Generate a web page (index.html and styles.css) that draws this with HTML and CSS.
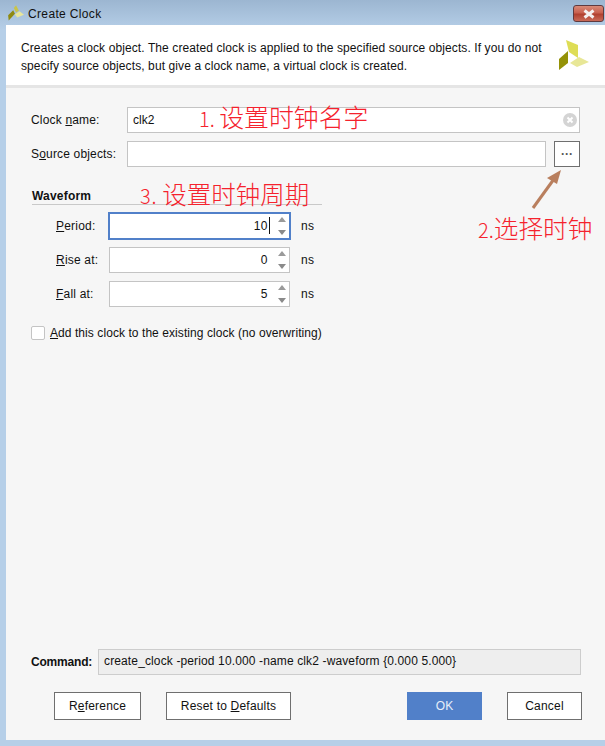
FILE: index.html
```html
<!DOCTYPE html>
<html lang="zh">
<head>
<meta charset="utf-8">
<title>Create Clock</title>
<link rel="stylesheet" href="styles.css">
</head>
<body>
<div class="window">
  <div class="titlebar">
    <svg class="logo-small" viewBox="0 0 30 30" width="17" height="17">
      <polygon points="16,2 21,12 16,15 12,7" fill="#c9c44a"/>
      <polygon points="2,20 11,11 14,17 3,29" fill="#8f8a10"/>
      <polygon points="14,18 22,13 30,19 18,24" fill="#e8e69c"/>
    </svg>
    <span class="title">Create Clock</span>
    <div class="close"><svg viewBox="0 0 14 10" width="14" height="10"><path d="M2.5 1.5 L11.5 8.5 M11.5 1.5 L2.5 8.5" stroke="#f4f0f0" stroke-width="3"/></svg></div>
  </div>
  <div class="main">
    <header class="intro">
      <p class="intro-text">Creates a clock object. The created clock is applied to the specified source objects. If you do not<br>specify source objects, but give a clock name, a virtual clock is created.</p>
      <svg class="logo" viewBox="0 0 30 30" width="30" height="30">
        <polygon points="7,0 19,5 19,18 10,12" fill="#dedd55"/>
        <polygon points="0,19 9,11 9,23 0,30" fill="#949207"/>
        <polygon points="11,23 20,17 30,22 18,27" fill="#e8e797"/>
      </svg>
    </header>
    <div class="content">
      <div class="row first">
        <label class="label"><span>Clock <u>n</u>ame:</span></label>
        <div class="input grow with-clear">clk2
          <svg class="clear" viewBox="0 0 14 14" width="14" height="14"><circle cx="7" cy="7" r="7" fill="#d4d4d4"/><path d="M4.5 4.5 L9.5 9.5 M9.5 4.5 L4.5 9.5" stroke="#fff" stroke-width="2"/></svg>
        </div>
      </div>
      <div class="row second">
        <label class="label"><span>S<u>o</u>urce objects:</span></label>
        <div class="input grow"></div>
        <button class="browse">···</button>
      </div>
      <div class="section">Waveform</div>
      <div class="spin-list">
        <div class="spin-row">
          <label class="spin-label"><u>P</u>eriod:</label>
          <div class="spin focused"><span class="val">10<i class="caret"></i></span><span class="arrows"><i class="up"></i><i class="down"></i></span></div>
          <span class="unit">ns</span>
        </div>
        <div class="spin-row">
          <label class="spin-label"><u>R</u>ise at:</label>
          <div class="spin"><span class="val">0</span><span class="arrows"><i class="up"></i><i class="down"></i></span></div>
          <span class="unit">ns</span>
        </div>
        <div class="spin-row">
          <label class="spin-label"><u>F</u>all at:</label>
          <div class="spin"><span class="val">5</span><span class="arrows"><i class="up"></i><i class="down"></i></span></div>
          <span class="unit">ns</span>
        </div>
      </div>
      <label class="check"><i class="box"></i><span><u>A</u>dd this clock to the existing clock (no overwriting)</span></label>
      <div class="spacer"></div>
      <div class="command">
        <b class="cmd-label">Command:</b>
        <div class="cmd-box">create_clock -period 10.000 -name clk2 -waveform {0.000 5.000}</div>
      </div>
      <div class="actions">
        <button class="btn ref">R<u>e</u>ference</button>
        <button class="btn reset">Reset to <u>D</u>efaults</button>
        <span class="gap"></span>
        <button class="btn ok">OK</button>
        <button class="btn cancel">Cancel</button>
      </div>
    </div>
  </div>
  <div class="note note1"><span class="num">1. </span>设置时钟名字</div>
  <div class="note note2"><span class="num">2.</span>选择时钟</div>
  <div class="note note3"><span class="num">3. </span>设置时钟周期</div>
  <svg class="pointer" viewBox="0 0 50 50" width="50" height="50">
    <path d="M6 42 L27 13" stroke="#b97f5e" stroke-width="3"/>
    <polygon points="34,4 20,12 30,18" fill="#b97f5e"/>
  </svg>
</div>
</body>
</html>
```
FILE: styles.css
```css
* { box-sizing: border-box; }
html, body { margin: 0; padding: 0; }
body {
  width: 605px;
  height: 746px;
  overflow: hidden;
  font-family: "Liberation Sans", Arial, sans-serif;
  font-size: 12px;
  color: #111;
}
.window {
  position: relative;
  width: 605px;
  height: 746px;
  display: flex;
  flex-direction: column;
  background: linear-gradient(#9cb6d1 0, #b6cfe8 30px, #b6cfe8 100%);
}
.titlebar {
  height: 25px;
  flex: none;
  display: flex;
  align-items: center;
  padding: 0 1px 0 7px;
}
.logo-small { margin-right: 4px; margin-top: 0; }
.title { font-size: 12px; letter-spacing: 0.35px; color: #111; margin-top: 2px; }
.close {
  margin-left: auto;
  margin-top: 2px;
  width: 31px;
  height: 17px;
  border: 1px solid #5f3a3f;
  border-radius: 3px;
  background: linear-gradient(#d98a78 0, #c8604f 45%, #b0402f 55%, #c96a58 100%);
  display: flex;
  align-items: center;
  justify-content: center;
}
.main {
  flex: 1;
  margin: 0 0 6px 6px;
  display: flex;
  flex-direction: column;
  min-height: 0;
  background: #f6f6f6;
}
.intro {
  height: 63px;
  flex: none;
  background: #fff;
  border-bottom: 3px solid #e5e5e5;
  padding: 14px 16px 0 15px;
  display: flex;
  justify-content: space-between;
}
.intro-text { margin: 0; line-height: 18px; letter-spacing: 0.1px; }
.logo { margin-top: 1px; }
.content {
  flex: 1;
  display: flex;
  flex-direction: column;
  padding: 19px 24px 20px 25px;
  min-height: 0;
}
.row { display: flex; align-items: center; }
.first { height: 26px; margin-right: 1px; }
.second { height: 26px; margin-top: 8px; margin-right: 1px; }
.label { width: 96px; flex: none; letter-spacing: 0.17px; }
.input {
  height: 26px;
  background: #fff;
  border: 1px solid #c4c4c4;
  padding: 0 5px;
  line-height: 24px;
  position: relative;
}
.grow { flex: 1; }
.clear { position: absolute; right: 2px; top: 5px; }
.browse {
  width: 26px;
  height: 26px;
  margin-left: 8px;
  background: #fff;
  border: 1px solid #6f6f6f;
  font: bold 12px "Liberation Sans", sans-serif;
  color: #555;
  padding: 0;
}
.section {
  margin-top: 22px;
  width: 290px;
  margin-left: 1px;
  height: 16px;
  border-bottom: 1px solid #c9c9c9;
  font-weight: bold;
  font-size: 12px;
  line-height: 14px;
  letter-spacing: 0.2px;
  margin-bottom: 8px;
}
.spin-list { display: flex; flex-direction: column; gap: 8px; }
.spin-row { display: flex; align-items: center; height: 26px; }
.spin-label { width: 53px; margin-left: 25px; letter-spacing: 0.2px; }
.spin {
  width: 181px;
  height: 26px;
  flex: none;
  border: 1px solid #c4c4c4;
  background: #fff;
  display: flex;
  align-items: center;
  justify-content: flex-end;
}
.focused { border: 2px solid #5180c9; width: 183px; height: 28px; margin: 0 -1px; }
.val { margin-right: 6px; position: relative; letter-spacing: 0.5px; }
.focused .val { margin-right: 6px; }
.caret {
  position: absolute;
  right: -2px;
  top: -2px;
  width: 1px;
  height: 17px;
  background: #111;
}
.arrows { width: 15px; display: flex; flex-direction: column; align-items: center; gap: 8px; }
.up, .down { display: block; width: 0; height: 0; border-left: 4.5px solid transparent; border-right: 4.5px solid transparent; }
.up { border-bottom: 5px solid #9a9a9a; }
.down { border-top: 5px solid #8a8a8a; }
.unit { margin-left: 11px; letter-spacing: 0.3px; }
.check { display: flex; align-items: center; gap: 5px; margin-top: 18px; height: 15px; letter-spacing: 0.07px; }
.box {
  width: 14px;
  height: 14px;
  background: #fff;
  border: 1px solid #c4c4c4;
  border-radius: 2px;
}
.spacer { flex: 1; }
.command { display: flex; align-items: center; height: 26px; }
.cmd-label { width: 67px; flex: none; letter-spacing: -0.2px; }
.cmd-box {
  flex: 1;
  height: 26px;
  background: #eee;
  border: 1px solid #cdcdcd;
  padding: 0 5px;
  line-height: 23px;
  letter-spacing: 0.13px;
}
.actions { display: flex; margin-top: 17px; margin-left: 23px; margin-right: -1px; }
.btn {
  height: 28px;
  background: #fff;
  border: 1px solid #6f6f6f;
  font: 12px "Liberation Sans", Arial, sans-serif;
  color: #111;
  padding: 0;
  letter-spacing: 0.2px;
}
.ref { width: 87px; }
.reset { width: 125px; margin-left: 25px; }
.gap { flex: 1; }
.ok { width: 75px; background: #5180c9; border-color: #5180c9; color: #e6eef9; }
.cancel { width: 75px; margin-left: 25px; }
.note {
  position: absolute;
  font-family: "Noto Sans CJK SC", sans-serif;
  font-weight: 300;
  color: #f5222d;
  white-space: nowrap;
  line-height: 30px;
}
.num { font-size: 20px; }
.note1 { left: 199px; top: 101px; font-size: 24.9px; }
.note2 { left: 478px; top: 212px; font-size: 24.7px; }
.note3 { left: 140px; top: 179px; font-size: 24.5px; }
.note3 .num { letter-spacing: 0.7px; }
.pointer { position: absolute; left: 527px; top: 166px; }
```
